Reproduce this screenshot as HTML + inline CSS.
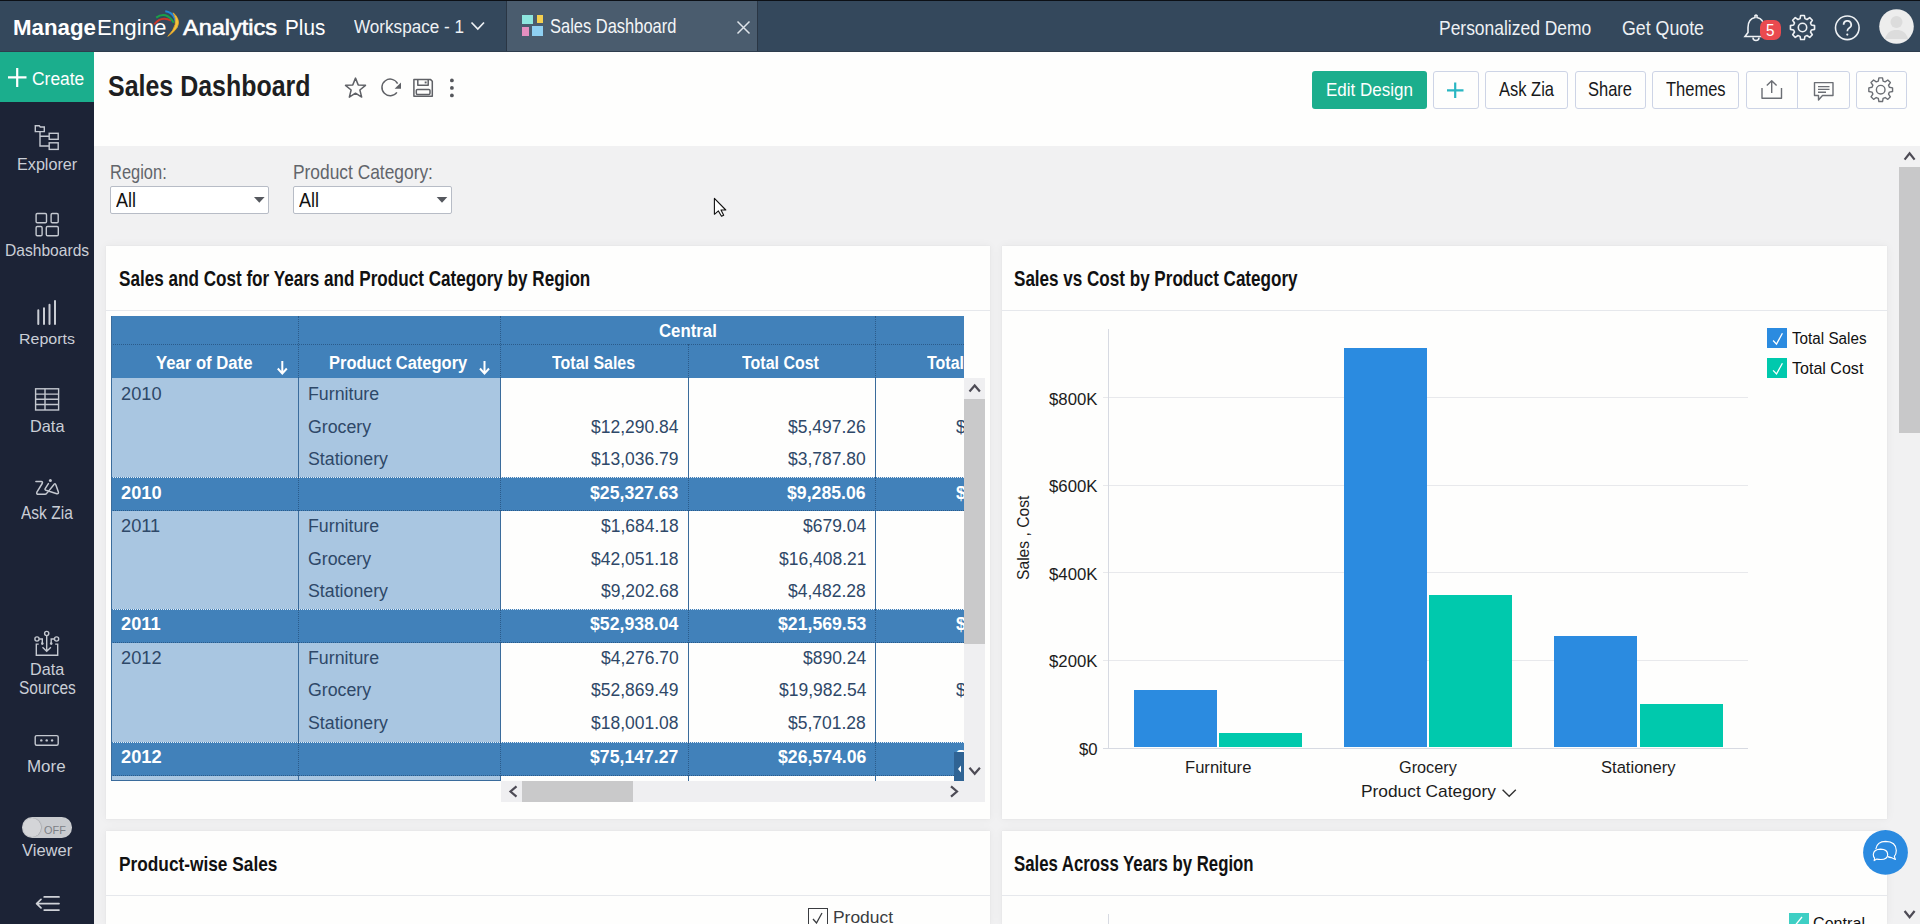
<!DOCTYPE html>
<html><head><meta charset="utf-8">
<style>
*{box-sizing:border-box;margin:0;padding:0}
html,body{width:1920px;height:924px;overflow:hidden;font-family:"Liberation Sans",sans-serif;background:#f1f1f2;position:relative}
.a{position:absolute}
.t{position:absolute;white-space:nowrap;line-height:1;transform-origin:0 0}
svg{position:absolute;overflow:visible}
</style></head><body>
<div class="a" style="left:0;top:0;width:1920px;height:52px;background:#34485c"></div>
<div class="a" style="left:0;top:0;width:1920px;height:1px;background:#0c1016"></div>
<div class="a" style="left:0;top:52px;width:94px;height:872px;background:#1c2336"></div>
<div class="a" style="left:0;top:52px;width:94px;height:50px;background:#1bae8d"></div>
<div class="a" style="left:94px;top:52px;width:1826px;height:94px;background:#fefefd"></div>
<div class="a" style="left:94px;top:146px;width:1826px;height:778px;background:#f1f1f2"></div>
<div class="t" style="left:12.50px;top:17.33px;font-size:21.80px;color:#ffffff;font-weight:bold;transform:scaleX(1.0225);">Manage</div>
<div class="t" style="left:96.50px;top:17.33px;font-size:21.80px;color:#ffffff;transform:scaleX(1.0237);">Engine</div>
<svg style="left:0;top:0" width="200" height="52">
<path d="M154.3 24.3 Q161 15.5 171.2 20.6" stroke="#c8372a" stroke-width="2.1" fill="none"/>
<path d="M156.2 17.6 Q166 10.5 173.8 22.8" stroke="#1aa04a" stroke-width="2.1" fill="none"/>
<path d="M165.3 11.3 Q176.5 13 176.6 28" stroke="#2386d6" stroke-width="2.1" fill="none"/>
<path d="M173.2 12.8 Q186 24.5 167.8 36.3 Q180 24 173.2 12.8z" fill="#f3c43a" stroke="#f0a828" stroke-width="0.8"/>
</svg>
<div class="t" style="left:183.30px;top:17.44px;font-size:22.38px;color:#ffffff;transform:scaleX(1.0496);-webkit-text-stroke:0.6px #fff;">Analytics</div>
<div class="t" style="left:285.00px;top:17.44px;font-size:22.38px;color:#ffffff;transform:scaleX(0.9257);">Plus</div>
<div class="t" style="left:354.00px;top:17.80px;font-size:18.90px;color:#eef1f4;transform:scaleX(0.9057);">Workspace - 1</div>
<svg style="left:470px;top:20px" width="16" height="12"><polyline points="1.5,2.5 7.8,9 14,2.5" stroke="#eef1f4" stroke-width="1.7" fill="none"/></svg>
<div class="a" style="left:506px;top:1px;width:252px;height:51px;background:#4a5c6e;border-left:1px solid #2a3644;border-right:1px solid #2a3644"></div>
<div class="a" style="left:0;top:51px;width:1920px;height:1px;background:#2e3d4d"></div>
<div class="a" style="left:522px;top:14.5px;width:11px;height:9.5px;background:#8ee6df"></div>
<div class="a" style="left:537px;top:14.5px;width:6px;height:8.5px;background:#f5cf4f"></div>
<div class="a" style="left:522px;top:27px;width:7px;height:9px;background:#e58fc0"></div>
<div class="a" style="left:532px;top:26px;width:11px;height:10px;background:#8fd0f2"></div>
<div class="t" style="left:549.50px;top:17.18px;font-size:19.62px;color:#f4f6f8;transform:scaleX(0.8404);">Sales Dashboard</div>
<svg style="left:735.5px;top:19.5px" width="15" height="15"><path d="M1.5 1.5 L13.5 13.5 M13.5 1.5 L1.5 13.5" stroke="#dfe4ea" stroke-width="1.5"/></svg>
<div class="t" style="left:1438.70px;top:17.84px;font-size:20.49px;color:#eef1f4;transform:scaleX(0.8515);">Personalized Demo</div>
<div class="t" style="left:1622.00px;top:17.84px;font-size:20.49px;color:#eef1f4;transform:scaleX(0.8672);">Get Quote</div>
<svg style="left:1743px;top:14px" width="26" height="28" viewBox="0 0 26 28">
<path d="M12 1.5 a1.6 1.6 0 0 1 2 0 v2 c5 1 7 5 7 10 v5 l3 4 h-22 l3 -4 v-5 c0 -5 2 -9 7 -10z" stroke="#eef1f4" stroke-width="1.6" fill="none"/>
<path d="M10 23.5 a3 3 0 0 0 6 0" stroke="#eef1f4" stroke-width="1.6" fill="none"/>
</svg>
<div class="a" style="left:1760px;top:20px;width:20.5px;height:20px;border-radius:7px;background:#ea4a4f"></div>
<div class="t" style="left:1766.00px;top:23.26px;font-size:15.99px;color:#ffffff;transform:scaleX(0.9562);">5</div>
<svg style="left:0;top:0" width="1920" height="52"><path d="M1811.37 25.05 L1814.56 25.66 L1814.56 29.34 L1811.37 29.95 L1810.50 32.03 L1812.33 34.73 L1809.73 37.33 L1807.03 35.50 L1804.95 36.37 L1804.34 39.56 L1800.66 39.56 L1800.05 36.37 L1797.97 35.50 L1795.27 37.33 L1792.67 34.73 L1794.50 32.03 L1793.63 29.95 L1790.44 29.34 L1790.44 25.66 L1793.63 25.05 L1794.50 22.97 L1792.67 20.27 L1795.27 17.67 L1797.97 19.50 L1800.05 18.63 L1800.66 15.44 L1804.34 15.44 L1804.95 18.63 L1807.03 19.50 L1809.73 17.67 L1812.33 20.27 L1810.50 22.97Z" stroke="#eef1f4" stroke-width="1.6" fill="none" stroke-linejoin="round"/><circle cx="1802.5" cy="27.5" r="4.2" stroke="#eef1f4" stroke-width="1.6" fill="none"/></svg>
<svg style="left:1834px;top:15px" width="27" height="26" viewBox="0 0 27 26">
<circle cx="13.3" cy="12.8" r="11.8" stroke="#eef1f4" stroke-width="1.6" fill="none"/>
<path d="M9.6 9.8 a3.8 3.8 0 1 1 5.6 3.2 c-1.4 0.8 -1.9 1.5 -1.9 3.2" stroke="#eef1f4" stroke-width="1.7" fill="none"/>
<circle cx="13.3" cy="19.6" r="1.1" fill="#eef1f4"/>
</svg>
<svg style="left:1879px;top:9px" width="35" height="35" viewBox="0 0 35 35">
<circle cx="17.5" cy="17.5" r="17.3" fill="#ededed"/>
<circle cx="17.5" cy="13" r="6" fill="#dcdcdc"/>
<path d="M6 30 c2 -7 6 -9 11.5 -9 s9.5 2 11.5 9z" fill="#dcdcdc"/>
</svg>
<svg style="left:7px;top:67px" width="21" height="21"><path d="M10.2 1 V20 M1 10.3 H19.5" stroke="#ffffff" stroke-width="2.2"/></svg>
<div class="t" style="left:31.50px;top:69.80px;font-size:18.90px;color:#ffffff;transform:scaleX(0.9223);">Create</div>
<svg style="left:0;top:0" width="94" height="924">
<path d="M35.3 125.8 h4 l1 1.2 h4 v4.6 h-9z" stroke="#c4c8d0" stroke-width="1.4" fill="none"/>
<path d="M40 131.6 V146 H49 M40 136.3 H49" stroke="#c4c8d0" stroke-width="1.4" fill="none"/>
<rect x="49.2" y="133.3" width="9" height="6" stroke="#c4c8d0" stroke-width="1.4" fill="none"/>
<rect x="49.2" y="142.8" width="9" height="6.6" stroke="#c4c8d0" stroke-width="1.4" fill="none"/>
<rect x="36.1" y="213.5" width="10.4" height="9.2" rx="1.2" stroke="#c4c8d0" stroke-width="1.4" fill="none"/>
<rect x="51.1" y="213.5" width="7.1" height="9.2" rx="1.2" stroke="#c4c8d0" stroke-width="1.4" fill="none"/>
<rect x="36.1" y="226.5" width="6" height="9.2" rx="1.2" stroke="#c4c8d0" stroke-width="1.4" fill="none"/>
<rect x="46.3" y="226.5" width="12" height="9.2" rx="1.2" stroke="#c4c8d0" stroke-width="1.4" fill="none"/>
<path d="M38.3 310.2 V324 M44 308.3 V324 M49.5 304.8 V324 M55 300.9 V324" stroke="#c9ccd3" stroke-width="2" stroke-linecap="round" fill="none"/>
<rect x="35.6" y="388.8" width="23" height="21.2" stroke="#c4c8d0" stroke-width="1.4" fill="none"/>
<path d="M35.6 394.1 H58.6 M35.6 399.3 H58.6 M35.6 404.5 H58.6 M45 388.8 V410" stroke="#c4c8d0" stroke-width="1.4" fill="none"/>
<path d="M35.9 481.6 H41.2 Q43.1 481.8 42.2 483.5 L36.9 492.2 Q36.1 494.3 38.4 494.3 H45.2 Q46.4 494.2 46.9 493 M48.4 483.6 L45.2 488.6 Q44.6 489.8 46 490.3 L56.8 493.7 Q59 494 58.3 491.8 L56 485.2 Q55 482.6 53.6 485 L47.4 492.6" stroke="#c4c8d0" stroke-width="1.5" fill="none" stroke-linejoin="round" stroke-linecap="round"/>
<circle cx="50.4" cy="480.4" r="1.5" fill="#c4c8d0"/>
<path d="M38.7 644.1 H36.3 V655.3 H57.7 V644.1 H55.2 M46.7 635.7 V651 M42.5 647.2 L46.7 651.2 L50.9 647.2 M39.3 639 H42.3 V643 M54.4 639 H51.2 V643" stroke="#c4c8d0" stroke-width="1.4" fill="none"/>
<circle cx="46.7" cy="633.5" r="2.1" stroke="#c4c8d0" stroke-width="1.4" fill="none"/><circle cx="37" cy="639" r="2.1" stroke="#c4c8d0" stroke-width="1.4" fill="none"/><circle cx="56.6" cy="639" r="2.1" stroke="#c4c8d0" stroke-width="1.4" fill="none"/>
<circle cx="42.3" cy="643.6" r="1.3" fill="#c4c8d0"/><circle cx="51.2" cy="643.6" r="1.3" fill="#c4c8d0"/>
<rect x="35.2" y="735.6" width="23" height="9.6" rx="1.5" stroke="#c4c8d0" stroke-width="1.4" fill="none"/>
<circle cx="41.3" cy="740.4" r="1.2" fill="#c4c8d0"/><circle cx="46.7" cy="740.4" r="1.2" fill="#c4c8d0"/><circle cx="52.1" cy="740.4" r="1.2" fill="#c4c8d0"/>
<path d="M44.2 896.9 H59 M36.8 903.6 H59 M44.2 910.1 H59 M41 899.4 L36.6 903.6 L41 907.8" stroke="#cfd2d8" stroke-width="1.7" fill="none" stroke-linecap="round" stroke-linejoin="round"/>
</svg>
<div class="t" style="left:17.00px;top:155.69px;font-size:16.42px;color:#caced6;transform:scaleX(0.9859);">Explorer</div>
<div class="t" style="left:4.80px;top:242.31px;font-size:16.28px;color:#caced6;transform:scaleX(0.9593);">Dashboards</div>
<div class="t" style="left:19.00px;top:331.37px;font-size:15.26px;color:#caced6;transform:scaleX(1.0481);">Reports</div>
<div class="t" style="left:29.50px;top:417.51px;font-size:16.28px;color:#caced6;transform:scaleX(1.0030);">Data</div>
<div class="t" style="left:20.50px;top:504.53px;font-size:17.44px;color:#caced6;transform:scaleX(0.8905);">Ask Zia</div>
<div class="t" style="left:29.80px;top:661.67px;font-size:16.57px;color:#caced6;transform:scaleX(0.9768);">Data</div>
<div class="t" style="left:18.60px;top:679.53px;font-size:17.44px;color:#caced6;transform:scaleX(0.8878);">Sources</div>
<div class="t" style="left:27.30px;top:758.15px;font-size:17.30px;color:#caced6;transform:scaleX(0.9797);">More</div>
<div class="t" style="left:21.70px;top:843.10px;font-size:15.70px;color:#caced6;transform:scaleX(1.0544);">Viewer</div>
<div class="a" style="left:21.7px;top:817.4px;width:50.3px;height:20.3px;border-radius:10.2px;background:#c9cbcf"></div>
<div class="a" style="left:22.5px;top:818.2px;width:18.7px;height:18.7px;border-radius:50%;background:#d4d5d8;box-shadow:0.5px 0 1px rgba(0,0,0,.25)"></div>
<div class="t" style="left:44.40px;top:825.04px;font-size:11.05px;color:#7d8086;transform:scaleX(0.9867);">OFF</div>
<div class="t" style="left:107.50px;top:71.00px;font-size:30.16px;color:#1e1f22;font-weight:bold;transform:scaleX(0.8275);">Sales Dashboard</div>
<svg style="left:0;top:0" width="1920" height="146">
<polygon points="355.50,78.10 358.20,84.88 365.49,85.36 359.87,90.02 361.67,97.09 355.50,93.20 349.33,97.09 351.13,90.02 345.51,85.36 352.80,84.88" stroke="#5f6166" stroke-width="1.5" fill="none" stroke-linejoin="round"/>
<path d="M397.6 83.6 A8.3 8.3 0 1 0 396.9 92.4" stroke="#5f6166" stroke-width="1.5" fill="none" stroke-linejoin="round"/>
<path d="M401 82.6 L394.6 88.7 L401 88.7z" fill="#5f6166"/>
<path d="M413.9 79.6 H430.6 L432.3 81.3 V96.3 H413.9z" stroke="#5f6166" stroke-width="1.5" fill="none" stroke-linejoin="round"/>
<path d="M417.8 79.6 V85.3 H428.2 V79.6" stroke="#5f6166" stroke-width="1.5" fill="none" stroke-linejoin="round"/>
<rect x="424.7" y="81.5" width="1.9" height="1.9" fill="#5f6166"/>
<rect x="416.3" y="89.4" width="13.7" height="5" rx="1.2" stroke="#5f6166" stroke-width="1.5" fill="none" stroke-linejoin="round"/>
<circle cx="451.9" cy="80.4" r="1.9" fill="#55575c"/><circle cx="451.9" cy="87.9" r="1.9" fill="#55575c"/><circle cx="451.9" cy="95.4" r="1.9" fill="#55575c"/>
</svg>
<div class="a" style="left:1311.7px;top:71px;width:115.1px;height:37.6px;border-radius:3px;background:#1bae8d"></div>
<div class="t" style="left:1326.00px;top:80.86px;font-size:18.46px;color:#ffffff;transform:scaleX(0.9216);">Edit Design</div>
<div class="a" style="left:1433px;top:71px;width:45.5px;height:37.6px;border:1px solid #cdd4e6;border-radius:3px;background:#fefefd;"></div>
<svg style="left:0;top:0" width="1920" height="146"><path d="M1455.2 82.6 V98 M1447 90.3 H1463.5" stroke="#29b6c2" stroke-width="2.2"/></svg>
<div class="a" style="left:1485px;top:71px;width:83px;height:37.6px;border:1px solid #cdd4e6;border-radius:3px;background:#fefefd;"></div>
<div class="t" style="left:1499.00px;top:80.30px;font-size:19.48px;color:#17181a;transform:scaleX(0.8467);">Ask Zia</div>
<div class="a" style="left:1575px;top:71px;width:70.6px;height:37.6px;border:1px solid #cdd4e6;border-radius:3px;background:#fefefd;"></div>
<div class="t" style="left:1588.00px;top:80.30px;font-size:19.48px;color:#17181a;transform:scaleX(0.8467);">Share</div>
<div class="a" style="left:1652px;top:71px;width:86.6px;height:37.6px;border:1px solid #cdd4e6;border-radius:3px;background:#fefefd;"></div>
<div class="t" style="left:1666.00px;top:80.30px;font-size:19.48px;color:#17181a;transform:scaleX(0.8472);">Themes</div>
<div class="a" style="left:1746px;top:71px;width:103.6px;height:37.6px;border:1px solid #cdd4e6;border-radius:3px;background:#fefefd;"></div>
<div class="a" style="left:1797px;top:71px;width:1px;height:37.6px;background:#cdd4e6"></div>
<div class="a" style="left:1856px;top:71px;width:50.8px;height:37.6px;border:1px solid #cdd4e6;border-radius:3px;background:#fefefd;"></div>
<svg style="left:0;top:0" width="1920" height="146">
<path d="M1762 88 V98.3 H1781.5 V88 M1771.7 93 V80.8 M1766.8 85.6 L1771.7 80.8 L1776.6 85.6" stroke="#6b6e74" stroke-width="1.4" fill="none" stroke-linejoin="round"/>
<path d="M1814.5 82.6 H1833 V95.5 H1822.5 L1818.5 100 V95.5 H1814.5z M1818 86.6 H1829.5 M1818 89.4 H1829.5 M1818 92.2 H1826" stroke="#6b6e74" stroke-width="1.4" fill="none" stroke-linejoin="round"/>
<path d="M1889.37 87.30 L1892.56 87.89 L1892.56 91.51 L1889.37 92.10 L1888.53 94.14 L1890.37 96.81 L1887.81 99.37 L1885.14 97.53 L1883.10 98.37 L1882.51 101.56 L1878.89 101.56 L1878.30 98.37 L1876.26 97.53 L1873.59 99.37 L1871.03 96.81 L1872.87 94.14 L1872.03 92.10 L1868.84 91.51 L1868.84 87.89 L1872.03 87.30 L1872.87 85.26 L1871.03 82.59 L1873.59 80.03 L1876.26 81.87 L1878.30 81.03 L1878.89 77.84 L1882.51 77.84 L1883.10 81.03 L1885.14 81.87 L1887.81 80.03 L1890.37 82.59 L1888.53 85.26Z" stroke="#6b6e74" stroke-width="1.4" fill="none" stroke-linejoin="round"/><circle cx="1880.7" cy="89.7" r="4.3" stroke="#6b6e74" stroke-width="1.4" fill="none"/>
</svg>
<div class="a" style="left:1897px;top:146px;width:23px;height:778px;background:#f1f1f2"></div>
<div class="a" style="left:1899px;top:167px;width:21px;height:266px;background:#c8c8c9"></div>
<svg style="left:0;top:0" width="1920" height="924"><path d="M1904.6 159.6 L1909.6 153.3 L1914.6 159.6" stroke="#4d4b55" stroke-width="2.2" fill="none"/><path d="M1904.6 911 L1909.6 917.3 L1914.6 911" stroke="#4d4b55" stroke-width="2.2" fill="none"/></svg>
<div class="t" style="left:110.00px;top:162.70px;font-size:19.48px;color:#62656b;transform:scaleX(0.8460);">Region:</div>
<div class="a" style="left:110px;top:186.4px;width:158.6px;height:27.2px;background:#ffffff;border:1px solid #b7bcc6;border-radius:2px"></div>
<div class="t" style="left:116.00px;top:190.73px;font-size:19.33px;color:#111111;transform:scaleX(0.9312);">All</div>
<div class="t" style="left:293.00px;top:162.70px;font-size:19.48px;color:#62656b;transform:scaleX(0.8918);">Product Category:</div>
<div class="a" style="left:293px;top:186.4px;width:158.8px;height:27.2px;background:#ffffff;border:1px solid #b7bcc6;border-radius:2px"></div>
<div class="t" style="left:299.00px;top:190.73px;font-size:19.33px;color:#111111;transform:scaleX(0.9312);">All</div>
<svg style="left:0;top:0" width="600" height="230"><path d="M254 197 H264.6 L259.3 202.8z" fill="#55585e"/><path d="M436.7 197 H447.3 L442 202.8z" fill="#55585e"/></svg>
<svg style="left:0;top:0" width="800" height="240"><path d="M714.4 198.4 V214.3 L718.4 210.9 L721.5 216.3 L723.7 215.2 L721 210 H725.8z" fill="#ffffff" stroke="#111" stroke-width="1.1" stroke-linejoin="round"/></svg>
<div class="a" style="left:106px;top:246px;width:884px;height:573px;background:#fefefd;box-shadow:0 0 1px rgba(0,0,0,.08),0 0 9px rgba(0,0,0,.05)"></div>
<div class="a" style="left:1002px;top:246px;width:885px;height:573px;background:#fefefd;box-shadow:0 0 1px rgba(0,0,0,.08),0 0 9px rgba(0,0,0,.05)"></div>
<div class="a" style="left:106px;top:831px;width:884px;height:93px;background:#fefefd;box-shadow:0 0 1px rgba(0,0,0,.08),0 0 9px rgba(0,0,0,.05)"></div>
<div class="a" style="left:1002px;top:831px;width:885px;height:93px;background:#fefefd;box-shadow:0 0 1px rgba(0,0,0,.08),0 0 9px rgba(0,0,0,.05)"></div>
<div class="a" style="left:106px;top:310px;width:884px;height:1px;background:#e6e8ec"></div>
<div class="a" style="left:106px;top:895px;width:884px;height:1px;background:#e6e8ec"></div>
<div class="a" style="left:1002px;top:310px;width:885px;height:1px;background:#e6e8ec"></div>
<div class="a" style="left:1002px;top:895px;width:885px;height:1px;background:#e6e8ec"></div>
<div class="t" style="left:118.60px;top:268.13px;font-size:21.80px;color:#111111;font-weight:bold;transform:scaleX(0.7850);">Sales and Cost for Years and Product Category by Region</div>
<div class="t" style="left:1014.40px;top:268.13px;font-size:21.80px;color:#111111;font-weight:bold;transform:scaleX(0.7828);">Sales vs Cost by Product Category</div>
<div class="t" style="left:118.60px;top:853.25px;font-size:21.08px;color:#111111;font-weight:bold;transform:scaleX(0.8196);">Product-wise Sales</div>
<div class="t" style="left:1014.40px;top:852.56px;font-size:22.24px;color:#111111;font-weight:bold;transform:scaleX(0.7542);">Sales Across Years by Region</div>
<div class="a" style="left:0;top:0;width:1920px;height:924px;clip-path:inset(316px 956px 143px 111px)">
<div class="a" style="left:111px;top:316px;width:853px;height:62px;background:#4181ba"></div>
<div class="a" style="left:111px;top:343.5px;width:853px;height:0;border-top:1px dotted #2b5b8a"></div>
<div class="a" style="left:298px;top:316px;width:0;height:62px;border-left:1px dotted #2b5b8a"></div>
<div class="a" style="left:500px;top:316px;width:0;height:62px;border-left:1px dotted #2b5b8a"></div>
<div class="a" style="left:875px;top:316px;width:0;height:62px;border-left:1px dotted #2b5b8a"></div>
<div class="a" style="left:688px;top:344px;width:0;height:34px;border-left:1px dotted #2b5b8a"></div>
<div class="t" style="left:659.00px;top:322.00px;font-size:18.90px;color:#ffffff;font-weight:bold;transform:scaleX(0.8880);">Central</div>
<div class="t" style="left:155.60px;top:354.30px;font-size:18.90px;color:#ffffff;font-weight:bold;transform:scaleX(0.8830);">Year of Date</div>
<div class="t" style="left:328.80px;top:354.30px;font-size:18.90px;color:#ffffff;font-weight:bold;transform:scaleX(0.8720);">Product Category</div>
<div class="t" style="left:552.00px;top:354.00px;font-size:18.90px;color:#ffffff;font-weight:bold;transform:scaleX(0.8450);">Total Sales</div>
<div class="t" style="left:741.70px;top:354.00px;font-size:18.90px;color:#ffffff;font-weight:bold;transform:scaleX(0.8450);">Total Cost</div>
<div class="t" style="left:927.00px;top:354.00px;font-size:18.90px;color:#ffffff;font-weight:bold;transform:scaleX(0.8450);">Total Sales</div>
<svg style="left:0;top:0" width="1920" height="924"><path d="M282.3 361 V373 M277.8 368.5 L282.3 373.6 L286.8 368.5" stroke="#fff" stroke-width="2" fill="none"/><path d="M484.5 361 V373 M480 368.5 L484.5 373.6 L489 368.5" stroke="#fff" stroke-width="2" fill="none"/></svg>
<div class="a" style="left:111px;top:378px;width:389px;height:99px;background:#a9c6e1"></div>
<div class="a" style="left:500px;top:378px;width:464px;height:99px;background:#fefefd"></div>
<div class="a" style="left:111px;top:477px;width:853px;height:34px;background:#4181ba;border-top:1px dotted #e8eef5;border-bottom:1px dotted #2b5b8a"></div>
<div class="a" style="left:298px;top:378px;width:1px;height:99px;background:#3b6c9c"></div>
<div class="a" style="left:298px;top:477px;width:0;height:34px;border-left:1px dotted #2b5b8a"></div>
<div class="a" style="left:500px;top:378px;width:1px;height:99px;background:#3b6c9c"></div>
<div class="a" style="left:500px;top:477px;width:0;height:34px;border-left:1px dotted #2b5b8a"></div>
<div class="a" style="left:688px;top:378px;width:1px;height:99px;background:#3b6c9c"></div>
<div class="a" style="left:688px;top:477px;width:0;height:34px;border-left:1px dotted #2b5b8a"></div>
<div class="a" style="left:875px;top:378px;width:1px;height:99px;background:#3b6c9c"></div>
<div class="a" style="left:875px;top:477px;width:0;height:34px;border-left:1px dotted #2b5b8a"></div>
<div class="t" style="left:121.00px;top:384.80px;font-size:18.90px;color:#2e4868;transform:scaleX(0.9660);">2010</div>
<div class="t" style="left:307.70px;top:384.80px;font-size:18.90px;color:#2e4868;transform:scaleX(0.9400);">Furniture</div>
<div class="t" style="left:307.70px;top:417.80px;font-size:18.90px;color:#2e4868;transform:scaleX(0.9400);">Grocery</div>
<div class="t" style="left:591.02px;top:417.80px;font-size:18.90px;color:#2e4868;transform:scaleX(0.9250);">$12,290.84</div>
<div class="t" style="left:788.24px;top:417.80px;font-size:18.90px;color:#2e4868;transform:scaleX(0.9250);">$5,497.26</div>
<div class="t" style="left:955.70px;top:417.80px;font-size:18.90px;color:#2e4868;transform:scaleX(0.9250);">$1</div>
<div class="t" style="left:307.70px;top:450.20px;font-size:18.90px;color:#2e4868;transform:scaleX(0.9400);">Stationery</div>
<div class="t" style="left:591.02px;top:450.20px;font-size:18.90px;color:#2e4868;transform:scaleX(0.9250);">$13,036.79</div>
<div class="t" style="left:788.24px;top:450.20px;font-size:18.90px;color:#2e4868;transform:scaleX(0.9250);">$3,787.80</div>
<div class="t" style="left:121.00px;top:483.70px;font-size:18.90px;color:#ffffff;font-weight:bold;transform:scaleX(0.9660);">2010</div>
<div class="t" style="left:590.48px;top:483.70px;font-size:18.90px;color:#ffffff;font-weight:bold;transform:scaleX(0.9350);">$25,327.63</div>
<div class="t" style="left:787.40px;top:483.70px;font-size:18.90px;color:#ffffff;font-weight:bold;transform:scaleX(0.9350);">$9,285.06</div>
<div class="t" style="left:955.70px;top:483.70px;font-size:18.90px;color:#ffffff;font-weight:bold;transform:scaleX(0.9350);">$1</div>
<div class="a" style="left:111px;top:511px;width:389px;height:98px;background:#a9c6e1"></div>
<div class="a" style="left:500px;top:511px;width:464px;height:98px;background:#fefefd"></div>
<div class="a" style="left:111px;top:609px;width:853px;height:34px;background:#4181ba;border-top:1px dotted #e8eef5;border-bottom:1px dotted #2b5b8a"></div>
<div class="a" style="left:298px;top:511px;width:1px;height:98px;background:#3b6c9c"></div>
<div class="a" style="left:298px;top:609px;width:0;height:34px;border-left:1px dotted #2b5b8a"></div>
<div class="a" style="left:500px;top:511px;width:1px;height:98px;background:#3b6c9c"></div>
<div class="a" style="left:500px;top:609px;width:0;height:34px;border-left:1px dotted #2b5b8a"></div>
<div class="a" style="left:688px;top:511px;width:1px;height:98px;background:#3b6c9c"></div>
<div class="a" style="left:688px;top:609px;width:0;height:34px;border-left:1px dotted #2b5b8a"></div>
<div class="a" style="left:875px;top:511px;width:1px;height:98px;background:#3b6c9c"></div>
<div class="a" style="left:875px;top:609px;width:0;height:34px;border-left:1px dotted #2b5b8a"></div>
<div class="t" style="left:121.00px;top:517.30px;font-size:18.90px;color:#2e4868;transform:scaleX(0.9660);">2011</div>
<div class="t" style="left:307.70px;top:517.30px;font-size:18.90px;color:#2e4868;transform:scaleX(0.9400);">Furniture</div>
<div class="t" style="left:600.74px;top:517.30px;font-size:18.90px;color:#2e4868;transform:scaleX(0.9250);">$1,684.18</div>
<div class="t" style="left:802.82px;top:517.30px;font-size:18.90px;color:#2e4868;transform:scaleX(0.9250);">$679.04</div>
<div class="t" style="left:307.70px;top:549.80px;font-size:18.90px;color:#2e4868;transform:scaleX(0.9400);">Grocery</div>
<div class="t" style="left:591.02px;top:549.80px;font-size:18.90px;color:#2e4868;transform:scaleX(0.9250);">$42,051.18</div>
<div class="t" style="left:778.52px;top:549.80px;font-size:18.90px;color:#2e4868;transform:scaleX(0.9250);">$16,408.21</div>
<div class="t" style="left:307.70px;top:582.30px;font-size:18.90px;color:#2e4868;transform:scaleX(0.9400);">Stationery</div>
<div class="t" style="left:600.74px;top:582.30px;font-size:18.90px;color:#2e4868;transform:scaleX(0.9250);">$9,202.68</div>
<div class="t" style="left:788.24px;top:582.30px;font-size:18.90px;color:#2e4868;transform:scaleX(0.9250);">$4,482.28</div>
<div class="t" style="left:121.00px;top:615.40px;font-size:18.90px;color:#ffffff;font-weight:bold;transform:scaleX(0.9660);">2011</div>
<div class="t" style="left:590.48px;top:615.40px;font-size:18.90px;color:#ffffff;font-weight:bold;transform:scaleX(0.9350);">$52,938.04</div>
<div class="t" style="left:777.58px;top:615.40px;font-size:18.90px;color:#ffffff;font-weight:bold;transform:scaleX(0.9350);">$21,569.53</div>
<div class="t" style="left:955.70px;top:615.40px;font-size:18.90px;color:#ffffff;font-weight:bold;transform:scaleX(0.9350);">$1</div>
<div class="a" style="left:111px;top:643px;width:389px;height:99px;background:#a9c6e1"></div>
<div class="a" style="left:500px;top:643px;width:464px;height:99px;background:#fefefd"></div>
<div class="a" style="left:111px;top:742px;width:853px;height:34px;background:#4181ba;border-top:1px dotted #e8eef5;border-bottom:1px dotted #2b5b8a"></div>
<div class="a" style="left:298px;top:643px;width:1px;height:99px;background:#3b6c9c"></div>
<div class="a" style="left:298px;top:742px;width:0;height:34px;border-left:1px dotted #2b5b8a"></div>
<div class="a" style="left:500px;top:643px;width:1px;height:99px;background:#3b6c9c"></div>
<div class="a" style="left:500px;top:742px;width:0;height:34px;border-left:1px dotted #2b5b8a"></div>
<div class="a" style="left:688px;top:643px;width:1px;height:99px;background:#3b6c9c"></div>
<div class="a" style="left:688px;top:742px;width:0;height:34px;border-left:1px dotted #2b5b8a"></div>
<div class="a" style="left:875px;top:643px;width:1px;height:99px;background:#3b6c9c"></div>
<div class="a" style="left:875px;top:742px;width:0;height:34px;border-left:1px dotted #2b5b8a"></div>
<div class="t" style="left:121.00px;top:648.80px;font-size:18.90px;color:#2e4868;transform:scaleX(0.9660);">2012</div>
<div class="t" style="left:307.70px;top:648.80px;font-size:18.90px;color:#2e4868;transform:scaleX(0.9400);">Furniture</div>
<div class="t" style="left:600.74px;top:648.80px;font-size:18.90px;color:#2e4868;transform:scaleX(0.9250);">$4,276.70</div>
<div class="t" style="left:802.82px;top:648.80px;font-size:18.90px;color:#2e4868;transform:scaleX(0.9250);">$890.24</div>
<div class="t" style="left:307.70px;top:681.40px;font-size:18.90px;color:#2e4868;transform:scaleX(0.9400);">Grocery</div>
<div class="t" style="left:591.02px;top:681.40px;font-size:18.90px;color:#2e4868;transform:scaleX(0.9250);">$52,869.49</div>
<div class="t" style="left:778.52px;top:681.40px;font-size:18.90px;color:#2e4868;transform:scaleX(0.9250);">$19,982.54</div>
<div class="t" style="left:955.70px;top:681.40px;font-size:18.90px;color:#2e4868;transform:scaleX(0.9250);">$1</div>
<div class="t" style="left:307.70px;top:714.40px;font-size:18.90px;color:#2e4868;transform:scaleX(0.9400);">Stationery</div>
<div class="t" style="left:591.02px;top:714.40px;font-size:18.90px;color:#2e4868;transform:scaleX(0.9250);">$18,001.08</div>
<div class="t" style="left:788.24px;top:714.40px;font-size:18.90px;color:#2e4868;transform:scaleX(0.9250);">$5,701.28</div>
<div class="t" style="left:121.00px;top:747.90px;font-size:18.90px;color:#ffffff;font-weight:bold;transform:scaleX(0.9660);">2012</div>
<div class="t" style="left:590.48px;top:747.90px;font-size:18.90px;color:#ffffff;font-weight:bold;transform:scaleX(0.9350);">$75,147.27</div>
<div class="t" style="left:777.58px;top:747.90px;font-size:18.90px;color:#ffffff;font-weight:bold;transform:scaleX(0.9350);">$26,574.06</div>
<div class="t" style="left:955.70px;top:747.90px;font-size:18.90px;color:#ffffff;font-weight:bold;transform:scaleX(0.9350);">$1</div>
<div class="a" style="left:111px;top:776px;width:389px;height:5px;background:#a9c6e1"></div>
<div class="a" style="left:298px;top:776px;width:1px;height:5px;background:#3b6c9c"></div>
<div class="a" style="left:500px;top:776px;width:1px;height:5px;background:#3b6c9c"></div>
<div class="a" style="left:688px;top:776px;width:1px;height:5px;background:#3b6c9c"></div>
<div class="a" style="left:875px;top:776px;width:1px;height:5px;background:#3b6c9c"></div>
<div class="a" style="left:111px;top:316px;width:1px;height:465px;background:#3b6c9c"></div>
<div class="a" style="left:111px;top:780px;width:389px;height:1px;background:#3b6c9c"></div>
<div class="a" style="left:954px;top:752px;width:10px;height:29px;background:#2f6394"></div>
<svg style="left:0;top:0" width="1920" height="924"><path d="M958 769 L961 765.5 V772.5z" fill="#fff"/></svg>
</div>
<div class="a" style="left:964px;top:378px;width:21px;height:424px;background:#efeff1"></div>
<div class="a" style="left:964px;top:399px;width:21px;height:245px;background:#c9c9ca"></div>
<div class="a" style="left:501px;top:781px;width:463px;height:21px;background:#efeff1"></div>
<div class="a" style="left:522px;top:781px;width:111px;height:21px;background:#c9c9ca"></div>
<svg style="left:0;top:0" width="1920" height="924">
<path d="M969.5 391.5 L974.7 385.5 L979.9 391.5" stroke="#4d4b55" stroke-width="2.2" fill="none"/>
<path d="M969.5 767.8 L974.7 773.8 L979.9 767.8" stroke="#4d4b55" stroke-width="2.2" fill="none"/>
<path d="M516.5 786.3 L510.5 791.5 L516.5 796.7" stroke="#4d4b55" stroke-width="2.2" fill="none"/>
<path d="M951 786.3 L957 791.5 L951 796.7" stroke="#4d4b55" stroke-width="2.2" fill="none"/>
</svg>
<div class="a" style="left:1103px;top:659.9px;width:645px;height:1px;background:#e8e9ec"></div>
<div class="a" style="left:1103px;top:572.3px;width:645px;height:1px;background:#e8e9ec"></div>
<div class="a" style="left:1103px;top:484.7px;width:645px;height:1px;background:#e8e9ec"></div>
<div class="a" style="left:1103px;top:397.1px;width:645px;height:1px;background:#e8e9ec"></div>
<div class="a" style="left:1108px;top:328.6px;width:1px;height:420px;background:#d7dae2"></div>
<div class="a" style="left:1103px;top:747.5px;width:645px;height:1.2px;background:#d7dae2"></div>
<div class="t" style="left:1078.55px;top:741.01px;font-size:16.28px;color:#1c1c1c;transform:scaleX(1.0300);">$0</div>
<div class="t" style="left:1048.71px;top:653.41px;font-size:16.28px;color:#1c1c1c;transform:scaleX(1.0300);">$200K</div>
<div class="t" style="left:1048.71px;top:565.81px;font-size:16.28px;color:#1c1c1c;transform:scaleX(1.0300);">$400K</div>
<div class="t" style="left:1048.71px;top:478.21px;font-size:16.28px;color:#1c1c1c;transform:scaleX(1.0300);">$600K</div>
<div class="t" style="left:1048.71px;top:390.61px;font-size:16.28px;color:#1c1c1c;transform:scaleX(1.0300);">$800K</div>
<div class="a" style="left:1134px;top:690px;width:83.0px;height:57.3px;background:#2b8be0"></div>
<div class="a" style="left:1218.8px;top:732.6px;width:83.0px;height:14.7px;background:#00c9ad"></div>
<div class="a" style="left:1344px;top:347.8px;width:83.3px;height:399.5px;background:#2b8be0"></div>
<div class="a" style="left:1429px;top:595px;width:83.2px;height:152.3px;background:#00c9ad"></div>
<div class="a" style="left:1554.4px;top:635.8px;width:82.9px;height:111.5px;background:#2b8be0"></div>
<div class="a" style="left:1639.7px;top:704.4px;width:82.9px;height:42.9px;background:#00c9ad"></div>
<div class="t" style="left:1184.60px;top:759.20px;font-size:16.35px;color:#1c1c1c;transform:scaleX(1.0147);">Furniture</div>
<div class="t" style="left:1399.10px;top:759.20px;font-size:16.35px;color:#1c1c1c;transform:scaleX(0.9940);">Grocery</div>
<div class="t" style="left:1601.00px;top:759.20px;font-size:16.35px;color:#1c1c1c;transform:scaleX(1.0134);">Stationery</div>
<div class="t" style="left:1361.30px;top:783.47px;font-size:17.15px;color:#1c1c1c;transform:scaleX(1.0115);">Product Category</div>
<svg style="left:0;top:0" width="1920" height="924"><path d="M1502.6 789.8 L1509.2 796.3 L1515.8 789.8" stroke="#333" stroke-width="1.4" fill="none"/></svg>
<div class="t" style="left:1029.7px;top:580px;font-size:17.4px;color:#1c1c1c;transform-origin:0 0;transform:rotate(-90deg) scaleX(0.8998) translate(-0.00px,-14.74px)">Sales , Cost</div>
<div class="a" style="left:1766.9px;top:328.1px;width:20px;height:19.8px;background:#2b8be0"></div>
<svg style="left:0;top:0" width="1920" height="924"><path d="M1773.1000000000001 340.5 L1776.5 344.1 L1782.4 333.3" stroke="#fff" stroke-width="1.3" fill="none"/></svg>
<div class="a" style="left:1766.9px;top:358px;width:20px;height:19.8px;background:#00c9ad"></div>
<svg style="left:0;top:0" width="1920" height="924"><path d="M1773.1000000000001 370.4 L1776.5 374 L1782.4 363.2" stroke="#fff" stroke-width="1.3" fill="none"/></svg>
<div class="t" style="left:1791.50px;top:331.28px;font-size:15.84px;color:#111;transform:scaleX(0.9625);">Total Sales</div>
<div class="t" style="left:1791.50px;top:361.30px;font-size:15.70px;color:#111;transform:scaleX(1.0230);">Total Cost</div>
<div class="a" style="left:1108px;top:913.7px;width:1px;height:11px;background:#d7dae2"></div>
<div class="a" style="left:1789px;top:913px;width:20px;height:12px;background:#3ecfc4"></div>
<svg style="left:0;top:0" width="1920" height="924"><path d="M1795.5 925 L1802 917" stroke="#fff" stroke-width="1.3" fill="none"/></svg>
<div class="t" style="left:1813.00px;top:916.26px;font-size:15.99px;color:#111;transform:scaleX(1.0088);">Central</div>
<div class="a" style="left:808px;top:908px;width:20px;height:20px;border:1.3px solid #3a3c40;background:#fefefd"></div>
<svg style="left:0;top:0" width="1920" height="924"><path d="M813 919 L816.5 923 L822 913" stroke="#3a3c40" stroke-width="1.3" fill="none"/></svg>
<div class="t" style="left:833.00px;top:910.26px;font-size:15.99px;color:#3a3c40;transform:scaleX(1.0890);">Product</div>
<svg style="left:1863px;top:830px" width="45" height="45" viewBox="0 0 45 45">
<circle cx="22.5" cy="22.4" r="22.4" fill="#2a8ae0"/>
<path d="M12.8 19 Q14 11.6 22.6 11.4 Q33 11.6 33.3 20.4 Q33.3 24.2 31.3 26.4 L32.4 29.5 L28.2 27.6 Q26.6 27.4 24.8 26.6" stroke="#fff" stroke-width="1.15" fill="none" stroke-linejoin="round"/>
<path d="M11.6 28.2 Q10.2 26.6 10.3 24.3 Q10.8 19.2 17.6 19.1 Q24.4 19.3 24.7 24.4 Q24.6 29.4 17.8 29.5 Q15.4 29.5 13.8 29.1 L11.2 30.6z" stroke="#fff" stroke-width="1.15" fill="none" stroke-linejoin="round"/>
</svg>
</body></html>
